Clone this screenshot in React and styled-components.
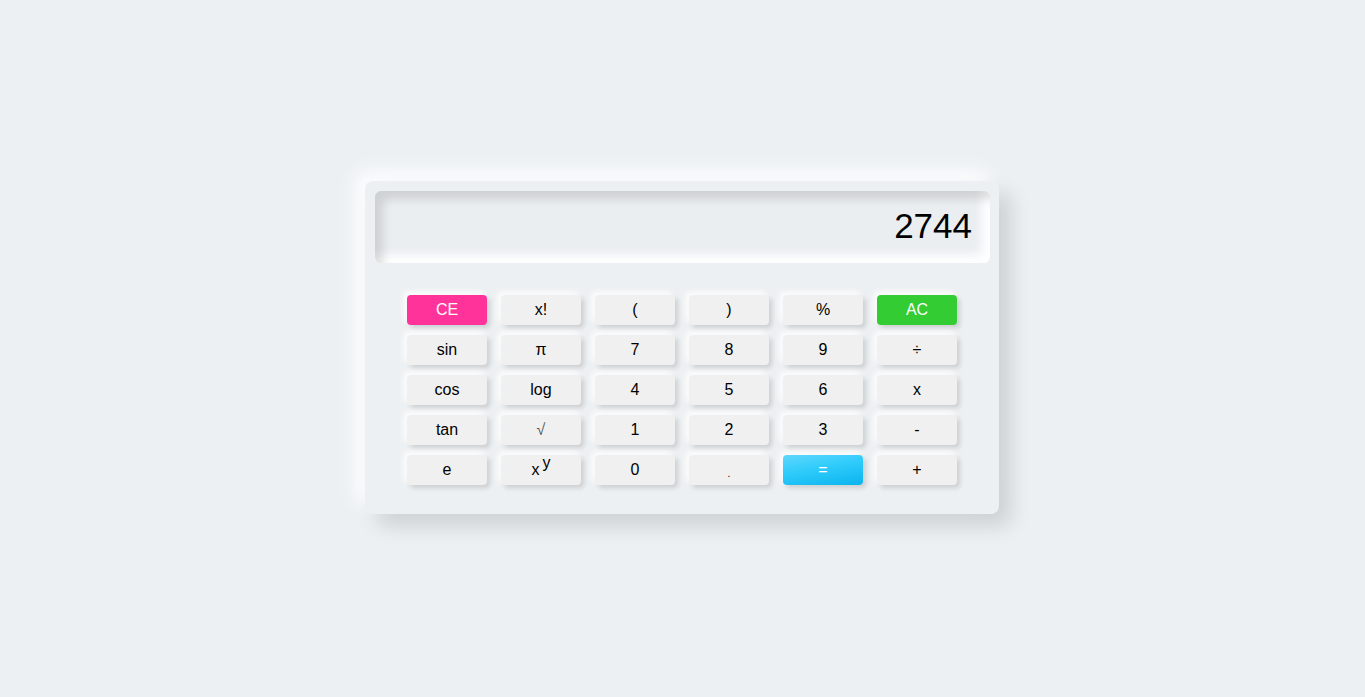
import React from "react";
import styled, { createGlobalStyle } from "styled-components";

const GlobalStyle = createGlobalStyle`
  html, body {
    margin: 0;
    padding: 0;
    background: #ecf0f3;
    font-family: "Liberation Sans", Arial, sans-serif;
  }
`;

const keys = [
  [{ label: "CE", kind: "pink" }, { label: "x!" }, { label: "(" }, { label: ")" }, { label: "%" }, { label: "AC", kind: "green" }],
  [{ label: "sin" }, { label: "π" }, { label: "7" }, { label: "8" }, { label: "9" }, { label: "÷" }],
  [{ label: "cos" }, { label: "log" }, { label: "4" }, { label: "5" }, { label: "6" }, { label: "x" }],
  [{ label: "tan" }, { label: "√", kind: "root" }, { label: "1" }, { label: "2" }, { label: "3" }, { label: "-" }],
  [{ label: "e" }, { label: "pow" }, { label: "0" }, { label: ".", kind: "dot" }, { label: "=", kind: "blue" }, { label: "+" }],
];

const App = () => {
  return (
    <>
      <GlobalStyle />
      <Page>
        <Calculator>
          <Display>2744</Display>
          <Keypad>
            {keys.flat().map((k, i) => (
              <Key key={i} kind={k.kind}>
                {k.label === "pow" ? (
                  <>
                    x<Sup>y</Sup>
                  </>
                ) : (
                  k.label
                )}
              </Key>
            ))}
          </Keypad>
        </Calculator>
      </Page>
    </>
  );
};

export default App;

const Page = styled.div`
  min-height: 100vh;
  box-sizing: border-box;
  padding: 0 1px 2px 0;
  display: flex;
  align-items: center;
  justify-content: center;
`;

const Calculator = styled.div`
  width: 634px;
  height: 333px;
  box-sizing: border-box;
  padding: 10px 9px 0 10px;
  background: #edf0f2;
  border-radius: 8px;
  box-shadow: 12px 12px 20px rgba(0, 0, 0, 0.13),
    -10px -10px 20px rgba(255, 255, 255, 0.9);
  display: flex;
  flex-direction: column;
  align-items: flex-start;
`;

const Display = styled.div`
  width: 615px;
  height: 72px;
  box-sizing: border-box;
  border-radius: 6px;
  background: #ebeef1;
  box-shadow: inset 8px 8px 10px rgba(0, 0, 0, 0.12),
    inset -8px -8px 10px rgba(255, 255, 255, 0.95);
  display: flex;
  align-items: center;
  justify-content: flex-end;
  padding: 0 18px 2px 0;
  font-size: 35px;
  color: #000;
`;

const Keypad = styled.div`
  align-self: center;
  margin: 32px 1px 0 0;
  display: grid;
  grid-template-columns: repeat(6, 80px);
  grid-auto-rows: 30px;
  column-gap: 14px;
  row-gap: 10px;
`;

const bgFor = (kind) => {
  if (kind === "pink") return "#ff3399";
  if (kind === "green") return "#33cc33";
  if (kind === "blue") return "linear-gradient(170deg, #5fd7fd 0%, #2ecbfb 45%, #0bb4ee 100%)";
  return "#f0f0f0";
};

const Key = styled.button`
  border: none;
  padding: 0;
  border-radius: 4px;
  background: ${(p) => bgFor(p.kind)};
  color: ${(p) =>
    p.kind === "pink" || p.kind === "green" || p.kind === "blue"
      ? "#fff"
      : p.kind === "root"
      ? "#555"
      : "#000"};
  font-family: "Liberation Sans", Arial, sans-serif;
  font-size: ${(p) => (p.kind === "dot" ? "10px" : "16px")};
  padding-top: ${(p) => (p.kind === "dot" ? "6px" : "0")};
  box-shadow: 3px 3px 5px rgba(0, 0, 0, 0.14), -3px -3px 6px rgba(255, 255, 255, 0.95);
  display: flex;
  align-items: center;
  justify-content: center;
  cursor: pointer;
`;

const Sup = styled.span`
  font-size: 16px;
  position: relative;
  top: -7px;
  margin-left: 3px;
`;
